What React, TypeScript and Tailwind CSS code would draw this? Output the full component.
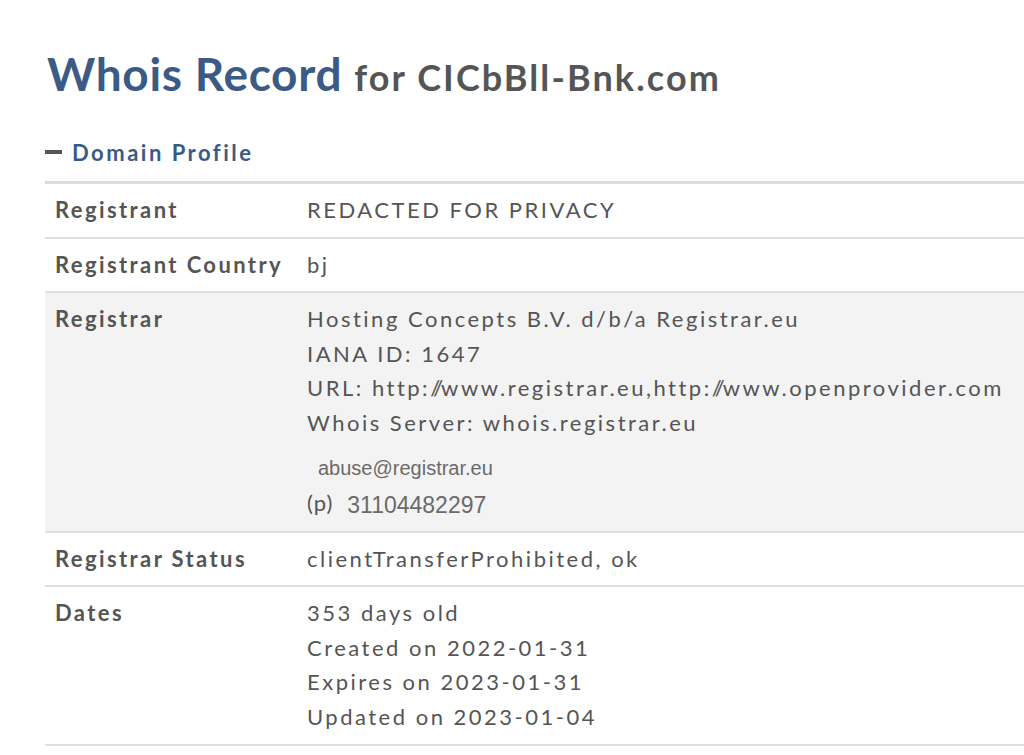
const ROWS: Array<{ label: string; lines: string[]; shaded?: boolean; contact?: boolean }> = [
  { label: "Registrant", lines: ["REDACTED FOR PRIVACY"] },
  { label: "Registrant Country", lines: ["bj"] },
  {
    label: "Registrar",
    shaded: true,
    contact: true,
    lines: [
      "Hosting Concepts B.V. d/b/a Registrar.eu",
      "IANA ID: 1647",
      "URL: http://www.registrar.eu,http://www.openprovider.com",
      "Whois Server: whois.registrar.eu",
    ],
  },
  { label: "Registrar Status", lines: ["clientTransferProhibited, ok"] },
  {
    label: "Dates",
    lines: [
      "353 days old",
      "Created on 2022-01-31",
      "Expires on 2023-01-31",
      "Updated on 2023-01-04",
    ],
  },
];

// slashes in the urls are drawn tight in the original
function Line({ text }: { text: string }) {
  const parts = text.split("//");
  return (
    <div>
      {parts.map((p, i) => (
        <span key={i}>
          {i > 0 && <span className="tracking-[-2px]">//</span>}
          {p}
        </span>
      ))}
    </div>
  );
}

export default function App() {
  return (
    <div className="min-h-[755px] w-[1024px] overflow-hidden bg-white font-['Lato','Noto_Sans',sans-serif] text-[#555]">
      <div className="pl-[45px] pt-[46px]">
        <h1 className="flex items-baseline gap-[12px] whitespace-nowrap pl-[2px] leading-[56px]">
          <span className="text-[46px] font-bold tracking-[0.7px] text-[#3b5b85]">Whois Record</span>
          <span className="text-[36px] font-bold tracking-[2.1px] text-[#555]">for CICbBll-Bnk.com</span>
        </h1>

        <div className="mt-[27px] flex h-[40px] items-center gap-[10px]">
          <span className="block h-[4px] w-[17px] bg-[#555]" />
          <span className="text-[22px] font-bold tracking-[2.5px] text-[#3b5b85]">Domain Profile</span>
        </div>

        <div className="mt-[9px] w-[1100px] border-t-[3px] border-[#dcdcdc]">
          {ROWS.map((r) => (
            <div
              key={r.label}
              className={`flex border-b-2 border-[#e0e0e0] py-[9px] text-[22px] leading-[34.6px] ${r.shaded ? "bg-[#f3f3f3]" : "bg-white"}`}
            >
              <div className="w-[262px] shrink-0 pl-[10px] font-bold tracking-[2.4px]">{r.label}</div>
              <div className="whitespace-nowrap tracking-[2.5px]">
                {r.lines.map((l) => (
                  <Line key={l} text={l} />
                ))}
                {r.contact && (
                  <>
                    <div className="flex h-[45px] items-center pl-[11px] pt-[10px] font-['Liberation_Sans',sans-serif] text-[20px] tracking-normal text-[#6a6a6a]">
                      abuse@registrar.eu
                    </div>
                    <div className="flex h-[36px] items-center">
                      <span className="tracking-[1px]">(p)</span>
                      <span className="ml-[14px] mt-[4px] font-['Liberation_Sans',sans-serif] text-[23px] tracking-normal text-[#6a6a6a]">
                        31104482297
                      </span>
                    </div>
                  </>
                )}
              </div>
            </div>
          ))}
        </div>
      </div>
    </div>
  );
}
